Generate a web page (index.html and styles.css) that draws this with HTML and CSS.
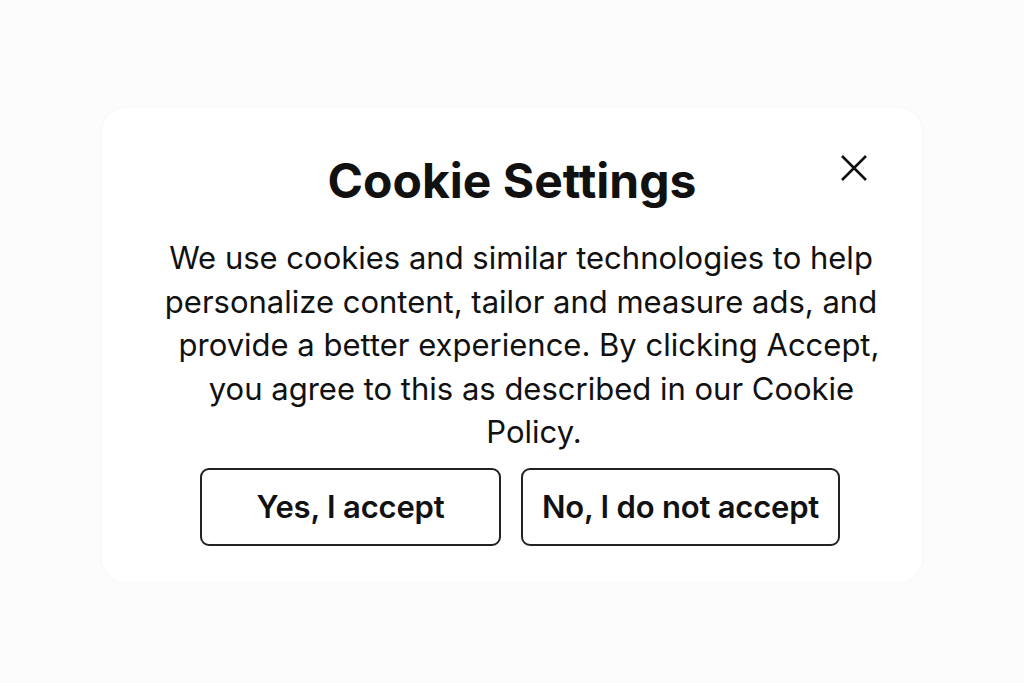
FILE: index.html
```html
<!DOCTYPE html>
<html lang="en">
<head>
    <meta charset="UTF-8">
    <title>Cookie Settings</title>
    <link rel="stylesheet" href="styles.css">
</head>
<body>
<div class="cookie_box">
    <div class="cookie_head">
        <h1>Cookie Settings</h1>
        <a href="" class="close" aria-label="Close">
            <svg width="28" height="28" viewBox="0 0 28 28">
                <path d="M2 2 L26 26 M26 2 L2 26" stroke="#111" stroke-width="2.6" fill="none"/>
            </svg>
        </a>
    </div>
    <p class="cookie_text">
        <span class="ln">We use cookies and similar technologies to help</span>
        <span class="ln">personalize content, tailor and measure ads, and</span>
        <span class="ln ln_in1">provide a better experience. By clicking Accept,</span>
        <span class="ln ln_in2">you agree to this as described in our Cookie</span>
        <span class="ln ln_in3">Policy.</span>
    </p>
    <div class="cookie_btns">
        <button class="btn btn_yes">Yes, I accept</button>
        <button class="btn btn_no">No, I do not accept</button>
    </div>
</div>
</body>
</html>
```

FILE: styles.css
```css
*{
    margin: 0;
    padding: 0;
    box-sizing: border-box;
}
body{
    background: #fcfcfc;
    font-family: Inter, "Liberation Sans", sans-serif;
    color: #111;
}
.cookie_box{
    width: 820px;
    height: 474px;
    margin: 108px auto 0;
    padding-top: 40px;
    background: #fff;
    border-radius: 24px;
    box-shadow: 0 0 6px rgba(0,0,0,0.03);
}
.cookie_head{
    position: relative;
    text-align: center;
}
.cookie_head h1{
    font-size: 48px;
    font-weight: 700;
    line-height: 66px;
}
.close{
    position: absolute;
    right: 54px;
    top: 6px;
}
.cookie_text{
    margin-top: 22px;
    padding-left: 18px;
    text-align: center;
    font-size: 31px;
    line-height: 43.5px;
}
.ln{
    display: block;
}
.ln_in1{
    padding-left: 16px;
}
.ln_in2{
    padding-left: 21px;
}
.ln_in3{
    padding-left: 26px;
}
.cookie_btns{
    display: flex;
    justify-content: center;
    gap: 20px;
    margin-top: 14px;
    padding-left: 16px;
}
.btn{
    height: 78px;
    background: #fff;
    border: 2px solid #222;
    border-radius: 9px;
    font-family: Inter, "Liberation Sans", sans-serif;
    font-size: 31px;
    font-weight: 600;
    color: #111;
    letter-spacing: -0.2px;
}
.btn_yes{
    width: 301px;
}
.btn_no{
    width: 319px;
}
```
